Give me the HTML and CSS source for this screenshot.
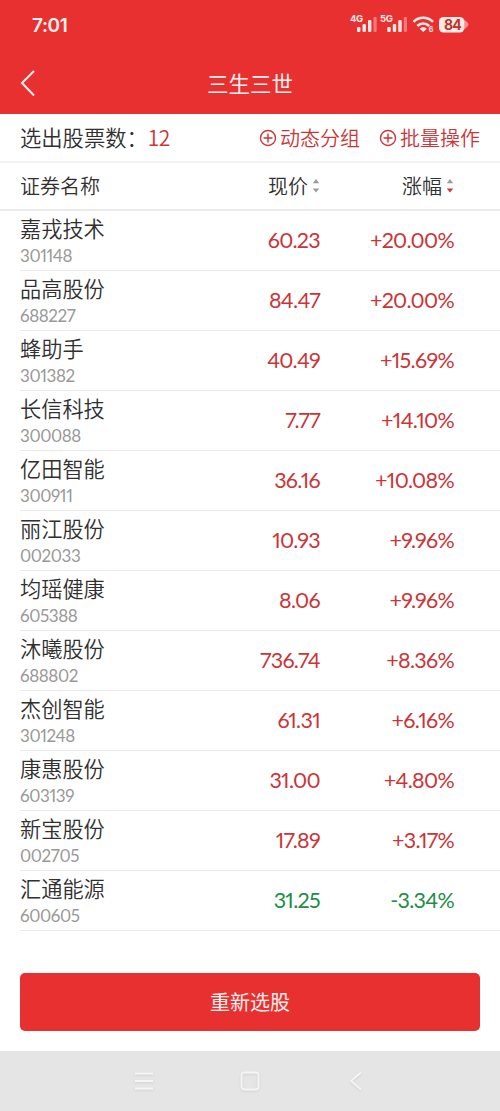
FILE: index.html
```html
<!DOCTYPE html>
<html lang="zh-CN">
<head>
  <meta charset="UTF-8">
  <meta name="viewport" content="width=device-width, initial-scale=1.0">
  <title>三生三世</title>
  <link rel="stylesheet" href="styles.css">
</head>
<body>
<header class="header">
  <div class="status-bar">
    <span class="time">7:01</span>
    <svg class="status-icons" width="120" height="24" viewBox="0 0 120 24" fill="#ffe9e6">
      <text class="net" x="0" y="12">4G</text>
      <rect x="7" y="17" width="3.4" height="5" rx="1"/>
      <rect x="12.5" y="14" width="3.4" height="8" rx="1"/>
      <rect x="18" y="10" width="3.4" height="12" rx="1"/>
      <rect x="23.5" y="7" width="3.2" height="15" rx="1" opacity=".4"/>
      <text class="net" x="30" y="12">5G</text>
      <rect x="37.3" y="17" width="3.4" height="5" rx="1"/>
      <rect x="42.8" y="14" width="3.4" height="8" rx="1"/>
      <rect x="48.3" y="10" width="3.4" height="12" rx="1"/>
      <rect x="53.8" y="7" width="3.2" height="15" rx="1" opacity=".4"/>
      <g fill="none" stroke="#ffe9e6" stroke-width="2.5">
        <path d="M63.5 11.8C69 6.4 77.5 6.4 83 11.8"/>
        <path d="M67.3 16C70.8 12.5 75.7 12.5 79.2 16"/>
      </g>
      <path d="M69.7 18.7Q73.2 15.5 76.8 18.7L73.2 22Z"/>
      <text class="wifi-num" x="78.7" y="22">6</text>
      <path d="M114 9.5Q118.5 12.5 118.5 14.5T114 19.5Z" opacity=".5"/>
      <rect x="89" y="7" width="25.3" height="15.5" rx="4.5"/>
      <text class="battery" x="102.5" y="19.8">84</text>
    </svg>
  </div>
  <div class="nav">
    <svg class="back" width="20" height="30" viewBox="0 0 20 30"><path d="M14 3L2 15L14 27.5"/></svg>
    <h1>三生三世</h1>
  </div>
</header>

<div class="toolbar">
  <div class="count">选出股票数：<span>12</span></div>
  <div class="action">
    <svg width="18" height="18" viewBox="0 0 18 18"><circle cx="9" cy="9" r="7.5"/><path d="M9 4.5V13.5M4.5 9H13.5"/></svg>
    动态分组
  </div>
  <div class="action">
    <svg width="18" height="18" viewBox="0 0 18 18"><circle cx="9" cy="9" r="7.5"/><path d="M9 4.5V13.5M4.5 9H13.5"/></svg>
    批量操作
  </div>
</div>

<div class="table-head">
  <div>证券名称</div>
  <div class="sort">现价<svg width="8" height="16" viewBox="0 0 8 16"><path d="M4 1L7.2 5.2H.8Z"/><path d="M.8 10.4H7.2L4 14.6Z"/></svg></div>
  <div class="sort">涨幅<svg width="8" height="16" viewBox="0 0 8 16"><path d="M4 1L7.2 5.2H.8Z"/><path class="on" d="M.8 10.4H7.2L4 14.6Z"/></svg></div>
</div>

<div class="list">
  <div class="row up"><div class="stock"><b>嘉戎技术</b><i>301148</i></div><span>60.23</span><span>+20.00%</span></div>
  <div class="row up"><div class="stock"><b>品高股份</b><i>688227</i></div><span>84.47</span><span>+20.00%</span></div>
  <div class="row up"><div class="stock"><b>蜂助手</b><i>301382</i></div><span>40.49</span><span>+15.69%</span></div>
  <div class="row up"><div class="stock"><b>长信科技</b><i>300088</i></div><span>7.77</span><span>+14.10%</span></div>
  <div class="row up"><div class="stock"><b>亿田智能</b><i>300911</i></div><span>36.16</span><span>+10.08%</span></div>
  <div class="row up"><div class="stock"><b>丽江股份</b><i>002033</i></div><span>10.93</span><span>+9.96%</span></div>
  <div class="row up"><div class="stock"><b>均瑶健康</b><i>605388</i></div><span>8.06</span><span>+9.96%</span></div>
  <div class="row up"><div class="stock"><b>沐曦股份</b><i>688802</i></div><span>736.74</span><span>+8.36%</span></div>
  <div class="row up"><div class="stock"><b>杰创智能</b><i>301248</i></div><span>61.31</span><span>+6.16%</span></div>
  <div class="row up"><div class="stock"><b>康惠股份</b><i>603139</i></div><span>31.00</span><span>+4.80%</span></div>
  <div class="row up"><div class="stock"><b>新宝股份</b><i>002705</i></div><span>17.89</span><span>+3.17%</span></div>
  <div class="row down"><div class="stock"><b>汇通能源</b><i>600605</i></div><span>31.25</span><span>-3.34%</span></div>
</div>

<button class="submit">重新选股</button>

<footer class="system-nav">
  <svg width="20" height="20" viewBox="0 0 20 20"><path d="M1 2.5H19M1 10H19M1 17.5H19"/></svg>
  <svg width="20" height="20" viewBox="0 0 20 20"><rect x="1.5" y="1.5" width="17" height="17" rx="3"/></svg>
  <svg width="20" height="20" viewBox="0 0 20 20"><path d="M15 1.5L5 10L15 18.5"/></svg>
</footer>
</body>
</html>
```
FILE: styles.css
```css
:root {
  --red: #e83030;
  --red-text: #cb3538;
  --green: #208e45;
  --text: #303030;
  --line: #ebebeb;
}
* {
  box-sizing: border-box;
}
body {
  margin: 0;
  height: 1111px;
  display: flex;
  flex-direction: column;
  background: #fff;
  color: var(--text);
  font-family: "Noto Sans CJK SC", sans-serif;
  font-size: 20px;
  font-weight: 350;
  line-height: 1;
}
.header {
  height: 114px;
  background: var(--red);
  color: #fff2ee;
}
.status-bar {
  height: 50px;
  padding: 10px 30px 0 32px;
  display: flex;
  justify-content: space-between;
}
.time {
  padding-top: 6px;
  font: 600 19px/20px Inter, sans-serif;
  letter-spacing: -0.4px;
}
.status-icons text {
  font-family: Inter, sans-serif;
  font-weight: 700;
}
.status-icons .net {
  font-size: 9.5px;
  letter-spacing: -0.3px;
}
.status-icons .wifi-num {
  font-size: 7px;
}
.status-icons .battery {
  font-size: 14px;
  letter-spacing: -0.9px;
  text-anchor: middle;
  fill: #b93630;
}
.nav {
  height: 65px;
  padding: 0 20px;
  display: grid;
  grid-template-columns: 20px 1fr 20px;
  align-items: center;
}
.back {
  fill: none;
  stroke: #fff2ee;
  stroke-width: 2;
}
h1 {
  margin: 0;
  text-align: center;
  font-size: 21.5px;
  font-weight: 400;
}
.toolbar {
  height: 49px;
  padding: 0 20px;
  display: flex;
  align-items: center;
  gap: 19px;
  border-bottom: 2px solid #f2f2f2;
}
.count {
  flex: 1;
  padding-bottom: 2px;
  font-size: 21.3px;
}
.count span {
  color: var(--red-text);
  font-size: 21px;
  letter-spacing: -0.5px;
}
.action {
  display: flex;
  align-items: center;
  gap: 3px;
  color: var(--red-text);
}
.action svg {
  fill: none;
  stroke: currentColor;
  stroke-width: 1.4;
}
.table-head,
.row {
  display: grid;
  grid-template-columns: 170px 130px 134px;
  align-items: center;
}
.table-head {
  height: 48px;
  padding-left: 20px;
  border-bottom: 2px solid var(--line);
}
.sort {
  display: flex;
  justify-content: flex-end;
  align-items: center;
  gap: 4px;
}
.sort svg {
  fill: #9b9b9b;
}
.sort .on {
  fill: #d8312f;
}
.list {
  padding-left: 20px;
}
.row {
  height: 60px;
  border-bottom: 1px solid var(--line);
}
.stock b {
  display: block;
  font-size: 21.2px;
  font-weight: 350;
}
.stock i {
  display: block;
  margin-top: 8px;
  color: #999;
  font: 400 17px/17px Lato, sans-serif;
  font-variant-numeric: proportional-nums;
  letter-spacing: -0.4px;
}
.row span {
  padding-bottom: 2px;
  text-align: right;
  font: 400 21.5px/24px Lato, sans-serif;
  font-variant-numeric: proportional-nums;
  letter-spacing: -0.7px;
}
.up span {
  color: var(--red-text);
}
.down span {
  color: var(--green);
}
.submit {
  margin: 42px 20px 0;
  height: 58px;
  border: 0;
  border-radius: 5px;
  background: var(--red);
  color: #fff2ee;
  font: inherit;
  font-weight: 400;
}
.system-nav {
  margin-top: auto;
  height: 60px;
  display: flex;
  justify-content: center;
  align-items: center;
  gap: 86px;
  background: #e5e5e5;
}
.system-nav svg {
  fill: none;
  stroke: #f5f5f5;
  stroke-width: 1.8;
  filter: drop-shadow(0 1px 1px #d0d0d0);
}
```
